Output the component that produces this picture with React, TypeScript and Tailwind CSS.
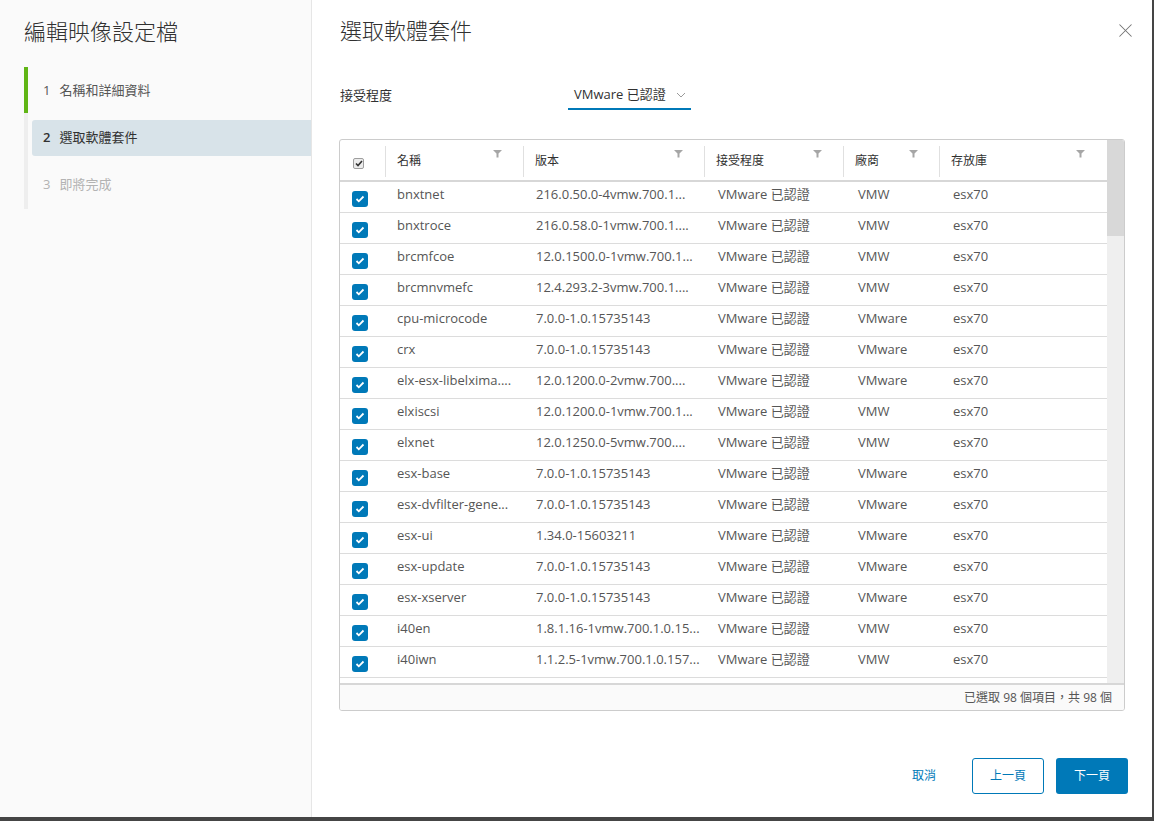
import { X } from 'lucide-react';

const ROWS = [
  ['bnxtnet', '216.0.50.0-4vmw.700.1...', 'VMW'],
  ['bnxtroce', '216.0.58.0-1vmw.700.1....', 'VMW'],
  ['brcmfcoe', '12.0.1500.0-1vmw.700.1...', 'VMW'],
  ['brcmnvmefc', '12.4.293.2-3vmw.700.1....', 'VMW'],
  ['cpu-microcode', '7.0.0-1.0.15735143', 'VMware'],
  ['crx', '7.0.0-1.0.15735143', 'VMware'],
  ['elx-esx-libelxima....', '12.0.1200.0-2vmw.700....', 'VMware'],
  ['elxiscsi', '12.0.1200.0-1vmw.700.1...', 'VMW'],
  ['elxnet', '12.0.1250.0-5vmw.700....', 'VMW'],
  ['esx-base', '7.0.0-1.0.15735143', 'VMware'],
  ['esx-dvfilter-gene...', '7.0.0-1.0.15735143', 'VMware'],
  ['esx-ui', '1.34.0-15603211', 'VMware'],
  ['esx-update', '7.0.0-1.0.15735143', 'VMware'],
  ['esx-xserver', '7.0.0-1.0.15735143', 'VMware'],
  ['i40en', '1.8.1.16-1vmw.700.1.0.15...', 'VMW'],
  ['i40iwn', '1.1.2.5-1vmw.700.1.0.157...', 'VMW'],
  ['', '', ''],
];

const FONT = { fontFamily: '"Open Sans", "Noto Sans CJK TC", sans-serif' };

function FilterIcon() {
  return (
    <svg width="9" height="8" viewBox="0 0 9 8" className="shrink-0">
      <path d="M0 0h9L5.5 3.5V7.5H3.5V3.5z" fill="#a6a6a6" />
    </svg>
  );
}

function Check() {
  return (
    <div className="w-4 h-4 rounded-[3px] bg-[#0079b8] flex items-center justify-center">
      <svg width="10" height="8" viewBox="0 0 10 8">
        <path d="M1.5 4l2.3 2.3L8.5 1.5" stroke="white" strokeWidth="1.8" fill="none" />
      </svg>
    </div>
  );
}

function HeaderCell({ label, w, last }: { label: string; w: string; last?: boolean }) {
  return (
    <div className={`${w} relative flex items-center h-full pl-[11px] pr-[20px]`}>
      <span className="mt-[2px]">{label}</span>
      <div className="absolute right-[22px] top-[10px]"><FilterIcon /></div>
      {!last && <div className="absolute right-0 top-[6px] bottom-[3px] w-px bg-[#e0e0e0]" />}
    </div>
  );
}

export default function App() {
  return (
    <div className="w-[1154px] h-[821px] bg-[#454545] overflow-hidden" style={FONT}>
      <div className="w-[1152px] h-[817px] bg-white flex">
        {/* sidebar */}
        <div className="w-[312px] shrink-0 bg-[#fafafa] border-r border-[#e6e6e6] pl-6 pt-[17px]">
          <h1 className="text-[22px] leading-[28px] font-light text-[#313131]">編輯映像設定檔</h1>
          <div className="mt-[22px] flex">
            <div className="w-1 flex flex-col">
              <div className="h-[46px] bg-[#60b515]" />
              <div className="h-[96px] bg-[#eeeeee]" />
            </div>
            <div className="flex-1 flex flex-col text-[13px]">
              <div className="h-[47px] flex items-center pl-[15px] text-[#565656] gap-[9px]">
                <span>1</span><span>名稱和詳細資料</span>
              </div>
              <div className="h-[47px] flex items-center pl-1">
                <div className="h-9 w-full bg-[#d8e3e9] rounded-l-[3px] flex items-center pl-[11px] gap-[9px] text-[#313131]">
                  <span className="font-semibold">2</span><span>選取軟體套件</span>
                </div>
              </div>
              <div className="h-[47px] flex items-center pl-[15px] text-[#b3b3b3] gap-[9px]">
                <span>3</span><span>即將完成</span>
              </div>
            </div>
          </div>
        </div>

        {/* main */}
        <div className="flex-1 flex flex-col pl-[27px] pr-[24px] pt-[16px]">
          <div className="flex items-start justify-between">
            <h2 className="text-[22px] leading-[28px] font-light text-[#313131] ml-px">選取軟體套件</h2>
            <button className="mt-[3px] mr-[-9px] text-[#747474]">
              <X size={23} strokeWidth={1.1} />
            </button>
          </div>

          <div className="mt-[38px] flex items-center h-[28px]">
            <span className="w-[228px] ml-px text-[13px] text-[#313131]">接受程度</span>
            <div className="w-[123px] h-[28px] border-b-2 border-[#0079b8] flex items-center pl-[6px] gap-[10px] text-[13px] text-[#313131]">
              <span>VMware 已認證</span>
              <svg width="10" height="6" viewBox="0 0 10 6">
                <path d="M1 1l4 4 4-4" stroke="#9a9a9a" strokeWidth="1" fill="none" />
              </svg>
            </div>
          </div>

          {/* datagrid */}
          <div className="mt-[29px] w-[786px] h-[572px] border border-[#cccccc] rounded-[3px] flex flex-col overflow-hidden">
            <div className="flex h-[543px]">
              <div className="flex-1 flex flex-col">
                <div className="h-[42px] flex border-b-2 border-[#d7d7d7] text-[12px] text-[#313131]">
                  <div className="w-[46px] relative flex items-center pl-[13px] h-full">
                    <div className="mt-[6px] w-[11px] h-[11px] border border-[#9e9e9e] bg-[#ececec] rounded-[2px] flex items-center justify-center">
                      <svg width="8" height="7" viewBox="0 0 8 7">
                        <path d="M1 3.5l2 2L7 1" stroke="#313131" strokeWidth="1.6" fill="none" />
                      </svg>
                    </div>
                    <div className="absolute right-0 top-[6px] bottom-[3px] w-px bg-[#e0e0e0]" />
                  </div>
                  <HeaderCell label="名稱" w="w-[138px]" />
                  <HeaderCell label="版本" w="w-[181px]" />
                  <HeaderCell label="接受程度" w="w-[139px]" />
                  <HeaderCell label="廠商" w="w-[96px]" />
                  <HeaderCell label="存放庫" w="flex-1" last />
                </div>
                <div className="flex-1 overflow-hidden text-[13px] text-[#565656]">
                  {ROWS.map((r, i) => (
                    <div key={i} className="h-[31px] flex border-b border-[#dcdcdc] whitespace-nowrap">
                      <div className="w-[46px] flex pl-[12px] pt-[9px] shrink-0">{r[0] && <Check />}</div>
                      <div className="w-[138px] pl-[11px] pt-[3px] overflow-hidden shrink-0">{r[0]}</div>
                      <div className="w-[181px] pl-[12px] pt-[3px] overflow-hidden shrink-0">{r[1]}</div>
                      <div className="w-[139px] pl-[13px] pt-[3px] overflow-hidden shrink-0">VMware 已認證</div>
                      <div className="w-[96px] pl-[14px] pt-[3px] overflow-hidden shrink-0">{r[2] || 'VMW'}</div>
                      <div className="flex-1 pl-[13px] pt-[3px] overflow-hidden">esx70</div>
                    </div>
                  ))}
                </div>
              </div>
              <div className="w-[17px] bg-[#efefef] flex flex-col">
                <div className="h-[96px] bg-[#d8d8d8]" />
              </div>
            </div>
            <div className="flex-1 border-t-2 border-[#d7d7d7] bg-[#fafafa] flex items-center justify-end pr-[12px] text-[12px] text-[#565656]">
              已選取 98 個項目，共 98 個
            </div>
          </div>

          <div className="mt-[47px] flex items-center justify-end gap-3 text-[12px]">
            <button className="w-[72px] h-9 text-[#0079b8]">取消</button>
            <button className="w-[72px] h-9 border border-[#0079b8] rounded-[3px] text-[#0079b8]">上一頁</button>
            <button className="w-[72px] h-9 bg-[#0079b8] rounded-[3px] text-white">下一頁</button>
          </div>
        </div>
      </div>
    </div>
  );
}
